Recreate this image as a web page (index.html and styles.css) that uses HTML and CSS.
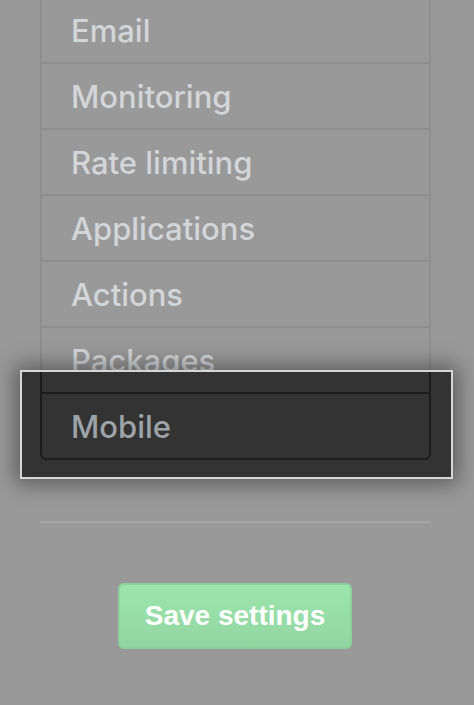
FILE: index.html
```html
<!DOCTYPE html>
<html lang="en">
<head>
<meta charset="utf-8">
<title>Settings menu</title>
<link rel="stylesheet" href="styles.css">
</head>
<body>
<div class="page">
  <ul class="menu">
    <li class="menu-item">Email</li>
    <li class="menu-item">Monitoring</li>
    <li class="menu-item">Rate limiting</li>
    <li class="menu-item">Applications</li>
    <li class="menu-item">Actions</li>
    <li class="menu-item">Packages</li>
    <li class="menu-item menu-item-active">Mobile</li>
  </ul>
  <hr class="divider">
  <div class="actions">
    <button class="btn-save" type="button">Save settings</button>
  </div>
</div>
</body>
</html>
```

FILE: styles.css
```css
html, body {
  margin: 0;
  padding: 0;
  background: #999999;
  overflow: hidden;
}

.page {
  margin-left: 40px;
  width: 391px;
  font-family: "Inter", "Liberation Sans", sans-serif;
}

.menu {
  position: relative;
  list-style: none;
  margin: -4px 0 0 0;
  padding: 0;
  border: 2px solid #8e8e8e;
  border-radius: 6px;
}

.menu::after {
  content: "";
  position: absolute;
  left: -22px;
  right: -24px;
  bottom: -21px;
  height: 109px;
  box-sizing: border-box;
  border: 2px solid #d6d6d6;
  background: #333333;
  box-shadow: 0 0 20px 5px rgba(0, 0, 0, 0.4);
  z-index: 1;
}

.menu-item {
  height: 64px;
  line-height: 66px;
  padding-left: 29px;
  font-size: 31px;
  font-weight: 500;
  color: #d3d6d9;
  border-top: 2px solid #8e8e8e;
}

.menu-item:first-child {
  border-top: none;
}

.menu-item-active {
  position: relative;
  z-index: 2;
  margin: 0 -2px -2px -2px;
  border: 2px solid #1c1c1c;
  border-radius: 0 0 6px 6px;
  color: #9ea3a8;
}

.menu-item-active::before {
  content: "";
  position: absolute;
  top: -22px;
  height: 20px;
  left: -2px;
  right: -2px;
  border-left: 2px solid #1c1c1c;
  border-right: 2px solid #1c1c1c;
}

.divider {
  margin: 61px 0 0 0;
  height: 0;
  border: none;
  border-top: 2px solid #a6a6a6;
}

.actions {
  display: flex;
  justify-content: center;
  margin-top: 60px;
  padding-right: 1px;
}

.btn-save {
  width: 234px;
  height: 66px;
  box-sizing: border-box;
  border: 2px solid #8ed09c;
  border-radius: 6px;
  background: linear-gradient(#9ce5ac, #93d5a2);
  color: #ffffff;
  font-family: "Liberation Sans", Arial, sans-serif;
  font-weight: 700;
  font-size: 28px;
  padding: 0;
}
```
